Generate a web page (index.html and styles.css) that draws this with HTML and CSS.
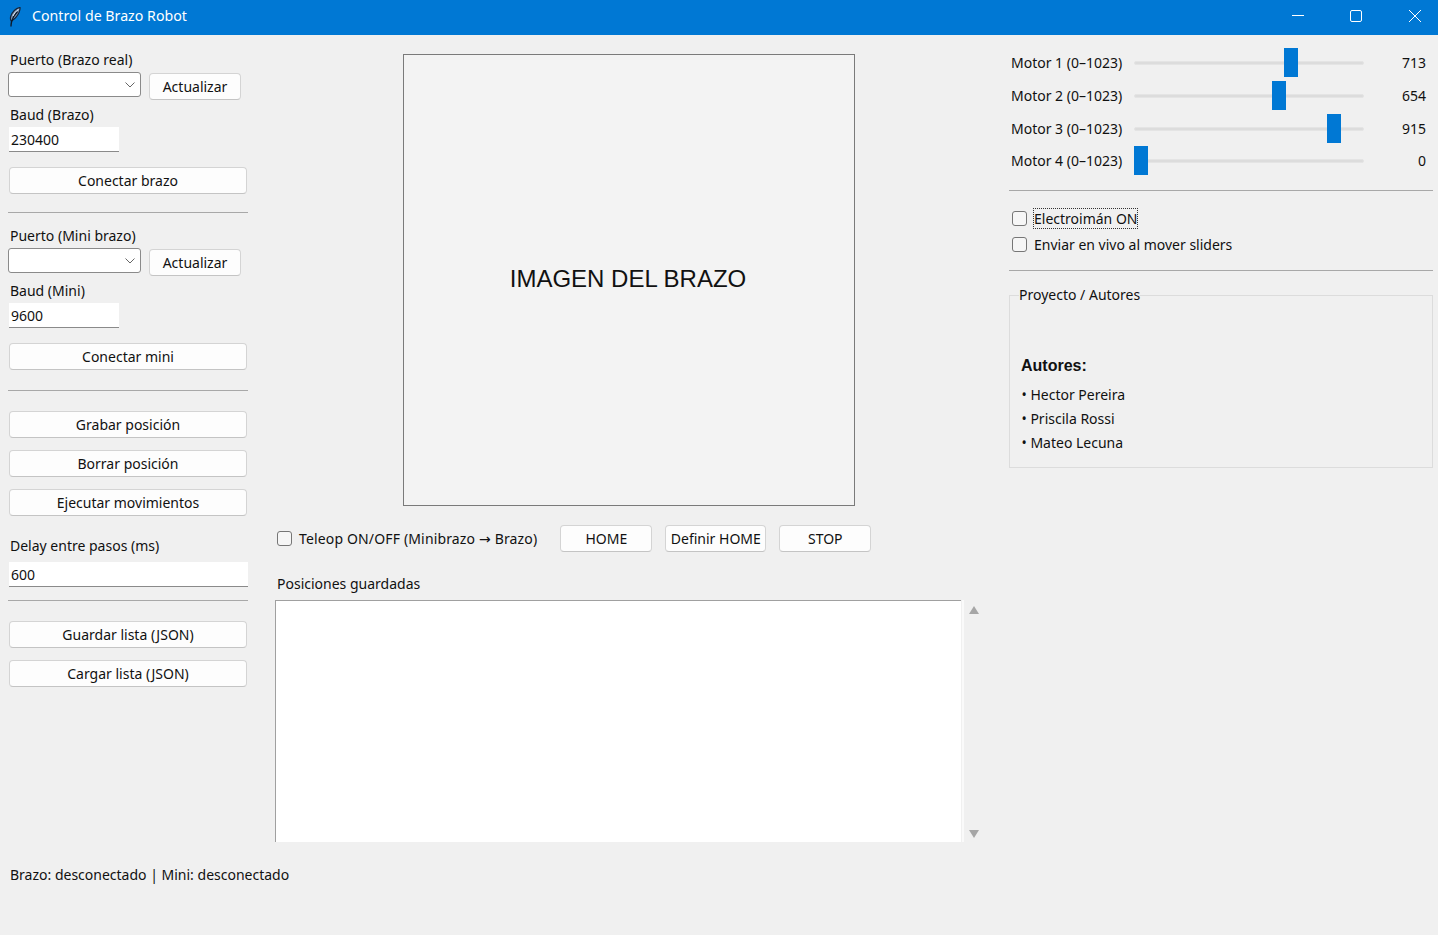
FILE: index.html
```html
<!DOCTYPE html>
<html lang="es">
<head>
    <meta charset="UTF-8">
    <meta name="viewport" content="width=device-width, initial-scale=1.0">
    <title>Control de Brazo Robot</title>
    <link rel="stylesheet" href="styles.css">
</head>
<body>
    <header class="titlebar">
        <svg class="app-icon" width="12" height="20" viewBox="0 0 12 20">
            <path d="M11 .5C7 1 3 5 1.700 9.500 1.200 11.500 1.500 13 2.200 14 5 12.500 8.500 9 10 5.500 10.800 3.500 11.200 2 11 .5z" fill="#7d95b4" stroke="#14253a" stroke-width="1.200"/>
            <path d="M8.500 4.500C6 7 3.800 10.500 2.500 15c-.3 1.500-.5 3-.5 4.500" fill="none" stroke="#0c1a2a" stroke-width="1.400"/>
            <path d="M9.500 2.500C7 4 5 6.500 4 9" fill="none" stroke="#e4ebf2" stroke-width="1"/>
        </svg>
        <span class="title">Control de Brazo Robot</span>
        <div class="win-controls">
            <svg width="58" height="35" viewBox="0 0 58 35"><path d="M22 15.500h12" stroke="#fff" fill="none"/></svg>
            <svg width="58" height="35" viewBox="0 0 58 35"><rect x="22.500" y="10.500" width="11" height="11" rx="1.500" stroke="#fff" fill="none"/></svg>
            <svg width="58" height="35" viewBox="0 0 58 35"><path d="M23 10l12 12M35 10L23 22" stroke="#fff" fill="none"/></svg>
        </div>
    </header>

    <main class="app">
        <section class="left">
            <label class="lbl first">Puerto (Brazo real)</label>
            <div class="port-row">
                <div class="combo"><svg width="10" height="6" viewBox="0 0 10 6"><path d="M.5.500L5 5 9.500.5" fill="none" stroke="#666"/></svg></div>
                <button class="btn btn-refresh">Actualizar</button>
            </div>
            <label class="lbl after-row">Baud (Brazo)</label>
            <div class="entry entry-short">230400</div>
            <button class="btn btn-wide after-entry">Conectar brazo</button>
            <hr class="sep sep-a">

            <label class="lbl">Puerto (Mini brazo)</label>
            <div class="port-row">
                <div class="combo"><svg width="10" height="6" viewBox="0 0 10 6"><path d="M.5.500L5 5 9.500.5" fill="none" stroke="#666"/></svg></div>
                <button class="btn btn-refresh">Actualizar</button>
            </div>
            <label class="lbl after-row">Baud (Mini)</label>
            <div class="entry entry-short">9600</div>
            <button class="btn btn-wide after-entry">Conectar mini</button>
            <hr class="sep sep-b">

            <button class="btn btn-wide">Grabar posición</button>
            <button class="btn btn-wide next">Borrar posición</button>
            <button class="btn btn-wide next">Ejecutar movimientos</button>
            <label class="lbl delay">Delay entre pasos (ms)</label>
            <div class="entry entry-long">600</div>
            <hr class="sep sep-c">
            <button class="btn btn-wide">Guardar lista (JSON)</button>
            <button class="btn btn-wide next">Cargar lista (JSON)</button>
        </section>

        <section class="center">
            <div class="image-box">IMAGEN DEL BRAZO</div>
            <div class="actions">
                <label class="check teleop"><span class="box"></span>Teleop ON/OFF (Minibrazo <span class="arrow">→</span> Brazo)</label>
                <button class="btn btn-home">HOME</button>
                <button class="btn btn-define">Definir HOME</button>
                <button class="btn btn-stop">STOP</button>
            </div>
            <div class="lbl list-title">Posiciones guardadas</div>
            <div class="list-wrap">
                <div class="listbox"></div>
                <div class="scrollbar">
                    <span class="arrow-up"></span>
                    <span class="arrow-down"></span>
                </div>
            </div>
        </section>

        <section class="right">
            <div class="motor">
                <span class="motor-name">Motor 1 (0–1023)</span>
                <div class="slider"><div class="track"></div><div class="thumb" style="left:150px"></div></div>
                <span class="motor-val">713</span>
            </div>
            <div class="motor">
                <span class="motor-name">Motor 2 (0–1023)</span>
                <div class="slider"><div class="track"></div><div class="thumb" style="left:138px"></div></div>
                <span class="motor-val">654</span>
            </div>
            <div class="motor">
                <span class="motor-name">Motor 3 (0–1023)</span>
                <div class="slider"><div class="track"></div><div class="thumb" style="left:193px"></div></div>
                <span class="motor-val">915</span>
            </div>
            <div class="motor">
                <span class="motor-name">Motor 4 (0–1023)</span>
                <div class="slider"><div class="track"></div><div class="thumb" style="left:0px"></div></div>
                <span class="motor-val">0</span>
            </div>
            <hr class="sep sep-r1">
            <label class="check check-r"><span class="box"></span><span class="focused">Electroimán ON</span></label>
            <label class="check check-r"><span class="box"></span>Enviar en vivo al mover sliders</label>
            <hr class="sep sep-r2">
            <fieldset class="authors">
                <legend>Proyecto / Autores</legend>
                <div class="authors-title">Autores:</div>
                <div class="author">• Hector Pereira</div>
                <div class="author">• Priscila Rossi</div>
                <div class="author">• Mateo Lecuna</div>
            </fieldset>
        </section>
    </main>

    <footer class="status">Brazo: desconectado | Mini: desconectado</footer>
</body>
</html>
```

FILE: styles.css
```css
* {
    box-sizing: border-box;
}
body {
    margin: 0;
    height: 935px;
    overflow: hidden;
    background-color: #f0f0f0;
    color: #111;
    font-family: "Noto Sans", Arial, sans-serif;
    font-size: 14px;
}
.titlebar {
    display: flex;
    align-items: center;
    height: 35px;
    background-color: #0078d4;
    color: #fff;
}
.app-icon {
    margin-left: 9px;
    margin-bottom: 1px;
}
.title {
    margin-left: 11px;
    margin-bottom: 4px;
    font-size: 14.200px;
}
.win-controls {
    display: flex;
    margin-left: auto;
    margin-right: -6px;
}
.app {
    display: grid;
    grid-template-columns: 240px 707px 424px;
    column-gap: 27px;
    height: 807px;
    padding-left: 8px;
}
.left, .center, .right {
    display: flex;
    flex-direction: column;
    align-items: flex-start;
}
.left {
    padding-top: 15px;
}
.lbl {
    display: block;
    height: 20px;
    line-height: 20px;
    padding-left: 2px;
    white-space: nowrap;
}
.after-row {
    margin-top: 5px;
}
.port-row {
    display: flex;
    gap: 8px;
    height: 28px;
    margin-top: 2px;
}
.combo {
    display: flex;
    align-items: center;
    justify-content: flex-end;
    width: 133px;
    height: 25px;
    padding-right: 5px;
    background-color: #fff;
    border: 1px solid #8a8a8a;
    border-radius: 3px;
}
.entry {
    height: 25px;
    margin-top: 2px;
    margin-left: 1px;
    padding-left: 2px;
    line-height: 26px;
    background-color: #fff;
    border-bottom: 1px solid #8a8a8a;
}
.entry-short {
    width: 110px;
}
.entry-long {
    width: 239px;
    margin-top: 6px;
}
.btn {
    height: 27px;
    padding: 0;
    background-color: #fdfdfd;
    border: 1px solid #d4d4d4;
    border-bottom-color: #c4c4c4;
    border-radius: 4px;
    color: inherit;
    font-family: inherit;
    font-size: 14px;
    white-space: nowrap;
}
.btn-refresh {
    width: 92px;
    margin-top: 1px;
}
.btn-wide {
    width: 238px;
    margin-left: 1px;
}
.after-entry {
    margin-top: 15px;
}
.next {
    margin-top: 12px;
}
.sep {
    align-self: stretch;
    height: 1px;
    margin: 0;
    background-color: #a8a8a8;
    border: 0;
}
.sep-a {
    margin-top: 18px;
    margin-bottom: 13px;
}
.sep-b {
    margin-top: 20px;
    margin-bottom: 20px;
}
.sep-c {
    margin-top: 13px;
    margin-bottom: 20px;
}
.delay {
    margin-top: 20px;
}
.image-box {
    display: flex;
    align-items: center;
    justify-content: center;
    width: 452px;
    height: 452px;
    margin-top: 19px;
    margin-left: 128px;
    padding-bottom: 2px;
    padding-right: 2px;
    background-color: #f3f3f3;
    border: 1px solid #7a7a7a;
    color: #111;
    font-family: "Liberation Sans", Arial, sans-serif;
    font-size: 24px;
}
.actions {
    display: flex;
    align-items: center;
    height: 27px;
    margin-top: 19px;
}
.check {
    display: flex;
    align-items: center;
    white-space: pre;
    padding-left: 2px;
}
.teleop {
    letter-spacing: .15px;
}
.arrow {
    font-family: "DejaVu Sans", sans-serif;
    font-size: 14px;
}
.box {
    width: 15px;
    height: 15px;
    margin-right: 7px;
    background-color: #f6f6f6;
    border: 1px solid #767676;
    border-radius: 3px;
}
.btn-home {
    width: 92px;
    margin-left: 23px;
}
.btn-define {
    width: 101px;
    margin-left: 13px;
}
.btn-stop {
    width: 92px;
    margin-left: 13px;
}
.list-title {
    margin-top: 22px;
}
.list-wrap {
    display: flex;
    align-self: stretch;
    height: 242px;
    margin-top: 6px;
}
.listbox {
    width: 686px;
    background-color: #fff;
    border-top: 1px solid #a0a0a0;
    border-left: 1px solid #a0a0a0;
}
.scrollbar {
    display: flex;
    flex-direction: column;
    justify-content: space-between;
    align-items: center;
    flex: 1;
    margin-left: 1px;
    padding: 6px 0 4px 2px;
    border-left: 2px solid #fafafa;
}
.arrow-up, .arrow-down {
    width: 0;
    height: 0;
    border-left: 5px solid transparent;
    border-right: 5px solid transparent;
}
.arrow-up {
    border-bottom: 8px solid #a6a6a6;
}
.arrow-down {
    border-top: 8px solid #a6a6a6;
}
.right {
    padding-top: 11.500px;
}
.motor {
    display: flex;
    align-items: center;
    align-self: stretch;
    height: 32.670px;
    padding-left: 2px;
}
.motor-name {
    width: 123px;
    white-space: nowrap;
}
.slider {
    position: relative;
    width: 230px;
    height: 29px;
}
.track {
    height: 4px;
    margin-top: 13px;
    background-color: #dcdcdc;
    border: 1px solid #e4e4e4;
    border-radius: 2px;
}
.thumb {
    position: absolute;
    top: 0;
    width: 14px;
    height: 29px;
    background-color: #0078d4;
}
.motor-val {
    width: 62px;
    text-align: right;
}
.sep-r1 {
    margin-top: 12.800px;
    margin-bottom: 14px;
}
.sep-r2 {
    margin-top: 12px;
    margin-bottom: 15px;
}
.check-r {
    height: 26.500px;
    padding-left: 3px;
}
.focused {
    outline: 1px dotted #333;
    line-height: 19px;
}
.authors {
    align-self: stretch;
    height: 182px;
    margin: 0;
    padding: 0 0 0 9px;
    border: 1px solid #dcdcdc;
}
.authors legend {
    padding: 0 0 1px;
    line-height: 18px;
}
.authors-title {
    margin-top: 51px;
    margin-bottom: 7px;
    margin-left: 2px;
    font-family: "Liberation Sans", Arial, sans-serif;
    font-size: 16px;
    font-weight: bold;
    line-height: 20px;
}
.author {
    height: 24px;
    line-height: 24px;
    margin-left: 2.500px;
}
.status {
    padding-left: 10px;
    padding-top: 23px;
    line-height: 20px;
}
```
